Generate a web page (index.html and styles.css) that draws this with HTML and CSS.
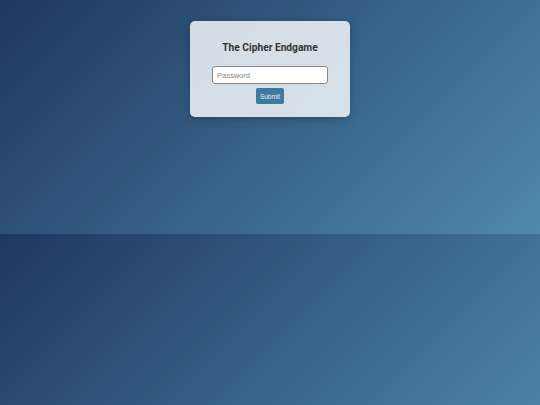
FILE: index.html
```html
<!DOCTYPE html>
<html lang="en">
<head>
  <meta charset="UTF-8" />
  <meta name="viewport" content="width=device-width, initial-scale=1.0"/>
  <title>The Cipher Endgame</title>
  <link rel="stylesheet" href="styles.css">
</head>
<body>
  <div class="login-container">
    <h2>The Cipher Endgame</h2>
    <form id="cipherForm">
      <input type="password" id="password" placeholder="Password" />
      <button type="submit">Submit</button>
    </form>
  </div>
</body>
</html>
```

FILE: styles.css
```css
* {
  box-sizing: border-box;
}
body {
  margin: 0;
  padding: 21px 0 117px;
  font-family: Roboto, 'Liberation Sans', Arial, sans-serif;
  background: linear-gradient(135deg, #1e3760, #5089ab);
  display: flex;
  justify-content: center;
  align-items: flex-start;
}
.login-container {
  background: rgba(228, 234, 240, 0.92);
  width: 160px;
  height: 96px;
  padding: 21px 22px 0;
  border-radius: 5px;
  box-shadow: 0 2px 8px rgba(0, 0, 0, 0.25);
  text-align: center;
}
h2 {
  margin: 0 0 12px;
  font-size: 10.2px;
  line-height: 12px;
  font-weight: 700;
  color: #333;
}
form {
  display: flex;
  flex-direction: column;
  align-items: center;
}
input[type="password"] {
  width: 116px;
  height: 18px;
  padding: 0 4px;
  border: 1px solid #888;
  border-radius: 3px;
  background: #fff;
  font-family: 'Liberation Sans', Arial, sans-serif;
  font-size: 7.5px;
}
input::placeholder {
  color: #888;
}
button {
  margin-top: 4px;
  width: 28px;
  height: 16px;
  padding: 0;
  background: #3d7a9c;
  color: #e6eef4;
  border: none;
  border-radius: 2px;
  font-family: 'Liberation Sans', Arial, sans-serif;
  font-size: 6.5px;
  cursor: pointer;
}
```
